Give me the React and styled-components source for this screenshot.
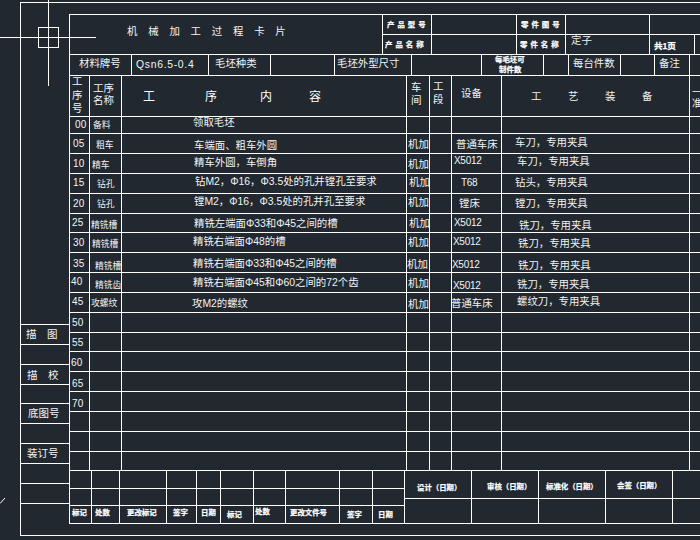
import React from 'react';
import styled, { createGlobalStyle } from 'styled-components';

const INK = '#ffffff';
const FONT = '"Liberation Sans","Noto Sans CJK SC",sans-serif';

const Global = createGlobalStyle`
  html, body { margin: 0; padding: 0; background: #212830; }
  #root { width: 700px; height: 540px; overflow: hidden; }
`;

const Page = styled.div`
  position: relative;
  width: 700px;
  height: 540px;
  overflow: hidden;
  background: #212830;
  padding: 2px 0 0 20px;
  box-sizing: border-box;
  font-family: ${FONT};
  color: #f2f4f5;
`;
const Overlay = styled.svg`
  position: absolute;
  left: 0;
  top: ${p => p.$top}px;
  pointer-events: none;
`;
const Frame = styled.div`
  display: flex;
  width: 780px;
  height: 534px;
  box-sizing: border-box;
  border-left: 1px solid ${INK};
  border-top: 1px solid ${INK};
  border-bottom: 1px solid ${INK};
`;
const Rail = styled.div`
  width: 48px;
  flex: none;
  display: flex;
  flex-direction: column;
`;
const RailCell = styled.div`
  height: ${p => p.$h}px;
  box-sizing: border-box;
  border-bottom: 1px solid ${INK};
  padding: ${p => p.$pt}px 0 0 ${p => p.$pl}px;
  font-size: 10.5px;
  line-height: 12px;
  white-space: nowrap;
`;
const Sheet = styled.div`
  flex: none;
  width: 731px;
  height: 510px;
  margin-top: 11px;
  border-left: 1px solid ${INK};
  border-top: 1px solid ${INK};
  box-sizing: border-box;
`;
const TopBlock = styled.div`
  display: grid;
  grid-template-columns: ${p => p.$cols};
  grid-template-rows: 20px 20px;
`;
const Row = styled.div`
  display: grid;
  grid-template-columns: ${p => p.$cols};
  height: ${p => p.$h}px;
`;
const BottomBand = styled.div`
  display: flex;
`;
const ChangeTable = styled.div`
  flex: none;
  width: 335px;
`;
const SignTable = styled.div`
  flex: none;
  width: 400px;
`;
const Cell = styled.div`
  box-sizing: border-box;
  min-width: 0;
  border-right: 1px solid ${INK};
  border-bottom: 1px solid ${INK};
  padding: ${p => p.$pt}px 0 0 ${p => Math.max(0, p.$pl)}px;
  text-indent: ${p => Math.min(0, p.$pl)}px;
  white-space: nowrap;
  line-height: 12px;
  grid-column: ${p => (p.$colSpan ? `span ${p.$colSpan}` : 'auto')};
  grid-row: ${p => (p.$rowSpan ? `span ${p.$rowSpan}` : 'auto')};
`;
const Body = styled.span`
  display: block;
  font-size: ${p => p.$size || 10.4}px;
  letter-spacing: ${p => p.$track || 0}px;
`;
const SeqNo = styled.span`
  display: block;
  font-size: 10px;
  letter-spacing: 0.3px;
`;
const ProcName = styled.span`
  display: block;
  font-size: 8.8px;
`;
const Tiny = styled.span`
  display: block;
  font-size: ${p => p.$size || 7.4}px;
  font-weight: 700;
  letter-spacing: ${p => p.$track || 0}px;
  line-height: ${p => p.$lh || 12}px;
  color: #fff;
  -webkit-text-stroke: 0.25px #fff;
`;
const Stack = styled.span`
  display: block;
  font-size: ${p => p.$size || 10.5}px;
  line-height: ${p => p.$lh}px;
`;
const Spaced = styled.span`
  display: flex;
  font-size: ${p => p.$size}px;
  color: #fff;
`;
const Letter = styled.span`
  flex: none;
  width: ${p => p.$w}px;
`;

const tracks = ends => {
  let prev = 69;
  return ends
    .map(e => {
      const w = e - prev;
      prev = e;
      return `${w}px`;
    })
    .join(' ');
};

const At = ({ start, top, x, y, colSpan, rowSpan, children }) => (
  <Cell
    $pl={x != null ? x - start : 0}
    $pt={y != null ? Math.max(0, y - 5 - top) : 0}
    $colSpan={colSpan}
    $rowSpan={rowSpan}
  >
    {children}
  </Cell>
);

const TOP_COLS = tracks([382, 431, 516, 565, 649, 694, 800]);
const MAT_ENDS = [131, 208, 270, 334, 411, 481, 543, 568, 620, 654, 689, 800];
const BODY_ENDS = [89, 121, 406, 429, 451, 501, 689, 800];
const BODY_COLS = tracks(BODY_ENDS);
const CHANGE_ENDS = [91, 119, 166, 196, 220, 253, 285, 339, 372, 404];
const CHANGE_COLS = tracks(CHANGE_ENDS);
const SIGN_COLS = '67px 67px 67px 67px 132px';

const startsOf = ends => [70, ...ends.slice(0, -1).map(e => e + 1)];
const BODY_STARTS = startsOf(BODY_ENDS);
const MAT_STARTS = startsOf(MAT_ENDS);
const CHANGE_STARTS = startsOf(CHANGE_ENDS);

const LINES = [113, 133, 153, 173, 193, 213, 232, 252, 272, 292, 312, 332, 351, 371, 391, 411, 431, 451, 470];

const ROWS = [
  { seq: ['00', 75, 124], name: ['备料', 93, 124], text: ['领取毛坯', 193, 122] },
  { seq: ['05', 73, 143], name: ['粗车', 96, 144], text: ['车端面、粗车外圆', 194, 145], shop: [408, 144], eq: ['普通车床', 456, 144], tool: ['车刀，专用夹具', 515, 142] },
  { seq: ['10', 73, 163], name: ['精车', 92, 164], text: ['精车外圆，车倒角', 194, 162], shop: [408, 164], eq: ['X5012', 454, 160, 10], tool: ['车刀，专用夹具', 517, 161] },
  { seq: ['15', 73, 182], name: ['钻孔', 97, 183], text: ['钻M2，Φ16，Φ3.5处的孔并镗孔至要求', 195, 181], shop: [409, 182], eq: ['T68', 461, 182, 10], tool: ['钻头，专用夹具', 515, 182] },
  { seq: ['20', 73, 203], name: ['钻孔', 97, 203], text: ['镗M2，Φ16，Φ3.5处的孔并孔至要求', 194, 201], shop: [408, 202], eq: ['镗床', 459, 203], tool: ['镗刀，专用夹具', 515, 203] },
  { seq: ['25', 72, 222], name: ['精铣槽', 91, 224], text: ['精铣左端面Φ33和Φ45之间的槽', 194, 223], shop: [409, 223], eq: ['X5012', 454, 222, 10], tool: ['铣刀，专用夹具', 519, 225] },
  { seq: ['30', 73, 242], name: ['精铣槽', 92, 243], text: ['精铣右端面Φ48的槽', 193, 241], shop: [408, 242], eq: ['X5012', 453, 241, 10], tool: ['铣刀，专用夹具', 518, 243] },
  { seq: ['35', 73, 263], name: ['精铣槽', 95, 265], text: ['精铣右端面Φ33和Φ45之间的槽', 193, 263], shop: [407, 264], eq: ['X5012', 452, 264, 10], tool: ['铣刀，专用夹具', 518, 265] },
  { seq: ['40', 71, 281], name: ['精铣齿', 95, 284], text: ['精铣右端面Φ45和Φ60之间的72个齿', 193, 282], shop: [408, 283], eq: ['X5012', 453, 285, 10], tool: ['铣刀，专用夹具', 517, 284] },
  { seq: ['45', 72, 301], name: ['攻螺纹', 91, 302], text: ['攻M2的螺纹', 192, 303], shop: [408, 304], eq: ['普通车床', 451, 303], tool: ['螺纹刀，专用夹具', 517, 301] },
  { seq: ['50', 72, 322] },
  { seq: ['55', 72, 342] },
  { seq: ['60', 71, 362] },
  { seq: ['65', 72, 383] },
  { seq: ['70', 72, 403] },
  {},
  {},
  {},
];

const RAIL = [
  { h: 322 },
  { h: 20, text: '描　图', x: 26, y: 334 },
  { h: 20 },
  { h: 20, text: '描　校', x: 27, y: 375 },
  { h: 19 },
  { h: 20, text: '底图号', x: 28, y: 413 },
  { h: 20 },
  { h: 20, text: '装订号', x: 27, y: 453 },
  { h: 20 },
  { h: 20 },
];

const CHANGE_LABELS = [
  ['标记', 72, 512], ['处数', 95, 512], ['更改标记', 127, 512], ['签字', 173, 512], ['日期', 201, 512],
  ['标记', 227, 514], ['处数', 255, 511], ['更改文件号', 290, 512], ['签字', 347, 514], ['日期', 378, 514],
];
const SIGN_LABELS = [
  ['设计（日期）', 12, 487], ['审核（日期）', 15, 486], ['标准化（日期）', 7, 486], ['会签（日期）', 11, 485], [null],
];

const railRows = (() => {
  let top = 3;
  return RAIL.map(r => {
    const out = { ...r, top };
    top += r.h;
    return out;
  });
})();

export default function App() {
  return (
    <Page>
      <Global />
      <Frame>
        <Rail>
          {railRows.map((r, i) => (
            <RailCell key={i} $h={r.h} $pl={r.text ? r.x - 21 : 0} $pt={r.text ? r.y - 6 - r.top : 0}>
              {r.text}
            </RailCell>
          ))}
        </Rail>
        <Sheet>
          <TopBlock $cols={TOP_COLS}>
            <At start={70} top={15} x={127} y={31} rowSpan={2}>
              <Body $track={10.8}>机械加工过程卡片</Body>
            </At>
            <At start={383} top={15} x={387} y={24}><Tiny $track={3}>产品型号</Tiny></At>
            <At />
            <At start={517} top={15} x={521} y={24}><Tiny $track={3}>零件图号</Tiny></At>
            <At />
            <At colSpan={2} />
            <At start={383} top={35} x={385} y={44}><Tiny $track={3}>产品名称</Tiny></At>
            <At />
            <At start={517} top={35} x={520} y={44}><Tiny $track={3}>零件名称</Tiny></At>
            <At start={566} top={35} x={571} y={40}><Body>定子</Body></At>
            <At start={650} top={35} x={654} y={45}><Tiny $size={8.5}>共1页</Tiny></At>
            <At />
          </TopBlock>

          <Row $cols={tracks(MAT_ENDS)} $h={20}>
            <At start={MAT_STARTS[0]} top={55} x={79} y={63}><Body>材料牌号</Body></At>
            <At start={MAT_STARTS[1]} top={55} x={136} y={64}><Body $track={0.7}>Qsn6.5-0.4</Body></At>
            <At start={MAT_STARTS[2]} top={55} x={215} y={63}><Body>毛坯种类</Body></At>
            <At />
            <At start={MAT_STARTS[4]} top={55} x={337} y={63}><Body>毛坯外型尺寸</Body></At>
            <At />
            <At start={MAT_STARTS[6]} top={55} x={495} y={58}>
              <Tiny $lh={10}>每毛坯可<br />&nbsp;&nbsp;制件数</Tiny>
            </At>
            <At />
            <At start={MAT_STARTS[8]} top={55} x={573} y={63}><Body>每台件数</Body></At>
            <At />
            <At start={MAT_STARTS[10]} top={55} x={659} y={63}><Body>备注</Body></At>
            <At />
          </Row>

          <Row $cols={BODY_COLS} $h={39}>
            <At start={70} top={75} x={72} y={80}><Stack $lh={13.5}>工<br />序<br />号</Stack></At>
            <At start={90} top={75} x={93} y={87}><Stack $lh={12}>工序<br />名称</Stack></At>
            <At start={122} top={75} x={143} y={96}>
              <Spaced $size={12}>
                <Letter $w={62}>工</Letter>
                <Letter $w={55}>序</Letter>
                <Letter $w={49}>内</Letter>
                <Letter $w={12}>容</Letter>
              </Spaced>
            </At>
            <At start={407} top={75} x={411} y={86}><Stack $lh={13}>车<br />间</Stack></At>
            <At start={430} top={75} x={433} y={85}><Stack $lh={13}>工<br />段</Stack></At>
            <At start={452} top={75} x={461} y={93}><Body>设备</Body></At>
            <At start={502} top={75} x={531} y={96}><Body $track={26.6}>工艺装备</Body></At>
            <At start={690} top={75} x={692} y={92}><Stack $size={10} $lh={11}>一<br />准</Stack></At>
          </Row>

          {ROWS.map((r, i) => {
            const top = LINES[i] + 1;
            const h = LINES[i + 1] - LINES[i];
            const place = (c, col) => ({ start: BODY_STARTS[col], top, x: c[c.length - 2], y: c[c.length - 1] });
            const eqSize = r.eq && r.eq[3];
            const eqPlace = r.eq && { start: BODY_STARTS[5], top, x: r.eq[1], y: r.eq[2] };
            return (
              <Row key={i} $cols={BODY_COLS} $h={h}>
                {r.seq ? <At {...place(r.seq, 0)}><SeqNo>{r.seq[0]}</SeqNo></At> : <At />}
                {r.name ? <At {...place(r.name, 1)}><ProcName>{r.name[0]}</ProcName></At> : <At />}
                {r.text ? <At {...place(r.text, 2)}><Body>{r.text[0]}</Body></At> : <At />}
                {r.shop ? <At {...place(r.shop, 3)}><Body>机加</Body></At> : <At />}
                <At />
                {r.eq ? <At {...eqPlace}><Body $size={eqSize} $track={eqSize ? -0.3 : 0}>{r.eq[0]}</Body></At> : <At />}
                {r.tool ? <At {...place(r.tool, 6)}><Body>{r.tool[0]}</Body></At> : <At />}
                <At />
              </Row>
            );
          })}

          <BottomBand>
            <ChangeTable>
              <Row $cols={CHANGE_COLS} $h={18}>
                {CHANGE_LABELS.map((_, i) => <At key={i} />)}
              </Row>
              <Row $cols={CHANGE_COLS} $h={17}>
                {CHANGE_LABELS.map((_, i) => <At key={i} />)}
              </Row>
              <Row $cols={CHANGE_COLS} $h={18}>
                {CHANGE_LABELS.map(([t, x, y], i) => (
                  <At key={i} start={CHANGE_STARTS[i]} top={506} x={x} y={y}><Tiny>{t}</Tiny></At>
                ))}
              </Row>
            </ChangeTable>
            <SignTable>
              <Row $cols={SIGN_COLS} $h={28}>
                {SIGN_LABELS.map(([t, x, y], i) => (
                  <At key={i} start={0} top={471} x={t ? x : 0} y={t ? y : 476}>
                    {t && <Tiny>{t}</Tiny>}
                  </At>
                ))}
              </Row>
              <Row $cols={SIGN_COLS} $h={25}>
                {SIGN_LABELS.map((_, i) => <At key={i} />)}
              </Row>
            </SignTable>
          </BottomBand>
        </Sheet>
      </Frame>

      <Overlay $top={0} width="100" height="90" viewBox="0 0 100 90">
        <g stroke="#fff" strokeWidth="1" fill="none" shapeRendering="crispEdges">
          <line x1="0" y1="37.5" x2="96" y2="37.5" />
          <line x1="48.5" y1="0" x2="48.5" y2="86" />
          <rect x="38.5" y="27.5" width="20" height="20" />
        </g>
      </Overlay>
      <Overlay $top={496} width="8" height="8" viewBox="0 0 8 8">
        <path d="M0 7.5 L5 2" stroke="#fff" strokeWidth="1" fill="none" />
      </Overlay>
    </Page>
  );
}
